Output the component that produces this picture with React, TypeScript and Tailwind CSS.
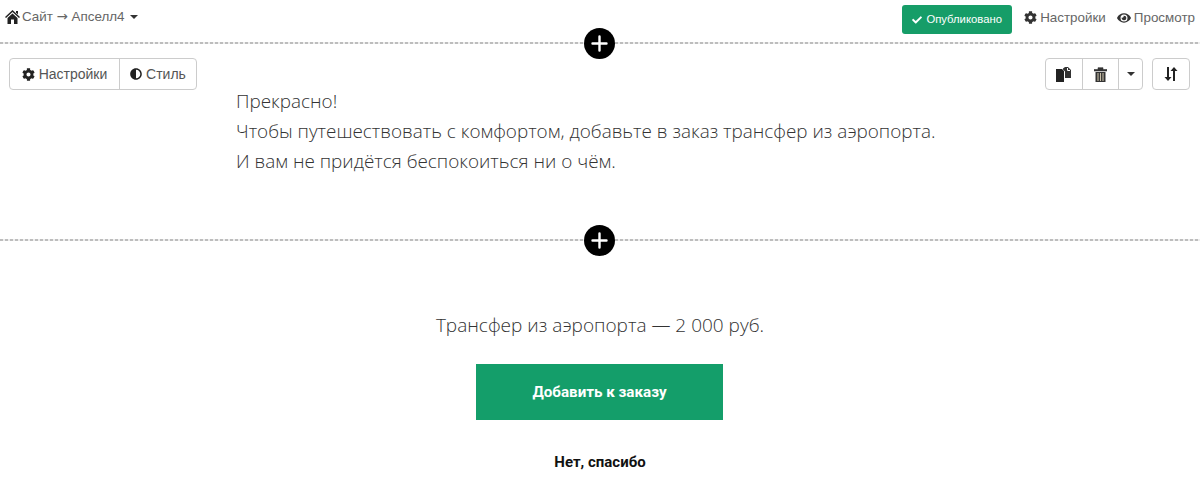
import { FaAdjust, FaCheck, FaCog, FaEye } from "react-icons/fa"

const ui = "font-['Liberation_Sans',Arial,sans-serif]"
const toolBtn = "flex h-[30px] items-center justify-center border-r border-[#cccccc] last:border-r-0"

function AddButton() {
  return (
    <button className="absolute left-[584px] top-[-14px] flex h-[31px] w-[31px] items-center justify-center rounded-full bg-black">
      <svg width="17" height="17" viewBox="0 0 17 17">
        <path d="M8.5 1.500v14M1.500 8.500h14" stroke="#fff" strokeWidth="2.400" strokeLinecap="round" />
      </svg>
    </button>
  )
}

function Divider() {
  return (
    <div className="relative h-[2px] bg-[repeating-linear-gradient(90deg,#bdbdbd_0,#bdbdbd_3px,#eeeeee_3px,#eeeeee_5px)]">
      <AddButton />
    </div>
  )
}

function HomeIcon() {
  return (
    <svg width="15" height="14" viewBox="0 0 15 14" fill="#222">
      <path d="M7.500 0L15 7l-1 1-6.500-6L1 8 0 7z" />
      <path d="M11 1h2v3.500l-2-2z" />
      <path d="M2.500 8l5-4.500 5 4.500v6H9V9.500H6V14H2.500z" />
    </svg>
  )
}

function CopyIcon() {
  return (
    <svg width="16" height="15" viewBox="0 0 16 15" fill="#222">
      <path d="M0 2h6l2 2v11H0z" />
      <path d="M9 0l3 0 3 3v8H9V4.500L7 2.500V1.500z" fill="#333" />
      <path d="M11.500 1v2.500H14" stroke="#fff" strokeWidth="1" fill="none" />
    </svg>
  )
}

function TrashIcon() {
  return (
    <svg width="13" height="15" viewBox="0 0 13 15">
      <path d="M0 2.500h13v1.500H0zM4 2.500V.7h5v1.800" fill="#333" stroke="#333" strokeWidth=".6" />
      <path d="M1.500 5h10v10h-10z" fill="#333" />
      <path d="M4 6v8M6.500 6v8M9 6v8" stroke="#c9c0a8" strokeWidth="1.100" />
    </svg>
  )
}

function SortIcon() {
  return (
    <svg width="14" height="14" viewBox="0 0 14 14" fill="#222">
      <path d="M3 0h2v10h2.500L4 14 .5 10H3z" />
      <path d="M9 14h2V4h2.500L10 0 6.500 4H9z" />
    </svg>
  )
}

function Caret() {
  return <span className="inline-block h-0 w-0 border-x-[4px] border-t-[4px] border-x-transparent border-t-[#333]" />
}

export default function App() {
  return (
    <div className="h-[497px] w-[1200px] overflow-hidden bg-white">
      {/* Top bar */}
      <header className={`${ui} flex h-[42px] items-start justify-between pl-[5px] pr-[5px] text-[13.400px] text-[#666]`}>
        <div className="flex items-center gap-[2px] pt-[7px]">
          <HomeIcon />
          <span>
            Сайт <span className="font-['DejaVu_Sans',sans-serif]">→</span> Апселл4
          </span>
          <span className="ml-[3px] flex"><Caret /></span>
        </div>
        <div className="flex items-center pt-[5px]">
          <div className="mr-[12px] flex h-[29px] w-[110px] items-center justify-center gap-[4px] rounded-[3px] bg-[#169d68] text-[11.300px] text-white">
            <FaCheck className="h-[10px] w-[10px]" />
            Опубликовано
          </div>
          <div className="flex items-center gap-[3px] pb-[3px]">
            <FaCog className="h-[13px] w-[13px] text-[#333]" />
            <span>Настройки</span>
          </div>
          <div className="ml-[11px] flex items-center gap-[3px] pb-[3px]">
            <FaEye className="h-[14px] w-[14px] text-[#333]" />
            <span>Просмотр</span>
          </div>
        </div>
      </header>

      <Divider />

      {/* Text block */}
      <section className="relative h-[195px] pl-[236px] pt-[42px] font-['Open_Sans',sans-serif] text-[18.900px] font-light leading-[30px] text-[#333]">
        <div className={`${ui} absolute left-[9px] top-[14px] flex h-[32px] w-[188px] rounded-[4px] border border-[#cccccc] text-[14px] leading-none text-[#555]`}>
          <div className={`${toolBtn} w-[110px] gap-[4px]`}>
            <FaCog className="h-[13px] w-[13px] text-[#222]" />
            Настройки
          </div>
          <div className={`${toolBtn} flex-1 gap-[4px]`}>
            <FaAdjust className="h-[12px] w-[12px] text-[#222]" />
            Стиль
          </div>
        </div>
        <div className="absolute left-[1045px] top-[14px] flex h-[32px] w-[98px] rounded-[4px] border border-[#cccccc] leading-none">
          <div className={`${toolBtn} w-[37px]`}><CopyIcon /></div>
          <div className={`${toolBtn} w-[36px]`}><TrashIcon /></div>
          <div className={`${toolBtn} flex-1`}><Caret /></div>
        </div>
        <div className="absolute left-[1152px] top-[14px] flex h-[32px] w-[38px] items-center justify-center rounded-[4px] border border-[#cccccc] leading-none">
          <SortIcon />
        </div>
        <p>Прекрасно!</p>
        <p>Чтобы путешествовать с комфортом, добавьте в заказ трансфер из аэропорта.</p>
        <p>И вам не придётся беспокоиться ни о чём.</p>
      </section>

      <Divider />

      {/* Offer */}
      <section className="flex flex-col items-center pt-[69px]">
        <p className="font-['Open_Sans',sans-serif] text-[19px] font-light leading-[30px] text-[#333]">
          Трансфер из аэропорта — 2 000 руб.
        </p>
        <button className="ml-[-1px] mt-[24px] h-[56px] w-[247px] bg-[#149e6a] font-['Roboto',sans-serif] text-[15.200px] font-bold text-white">
          Добавить к заказу
        </button>
        <div className="mt-[32px] font-['Roboto',sans-serif] text-[15px] font-bold leading-[20px] text-[#111]">
          Нет, спасибо
        </div>
      </section>
    </div>
  )
}
